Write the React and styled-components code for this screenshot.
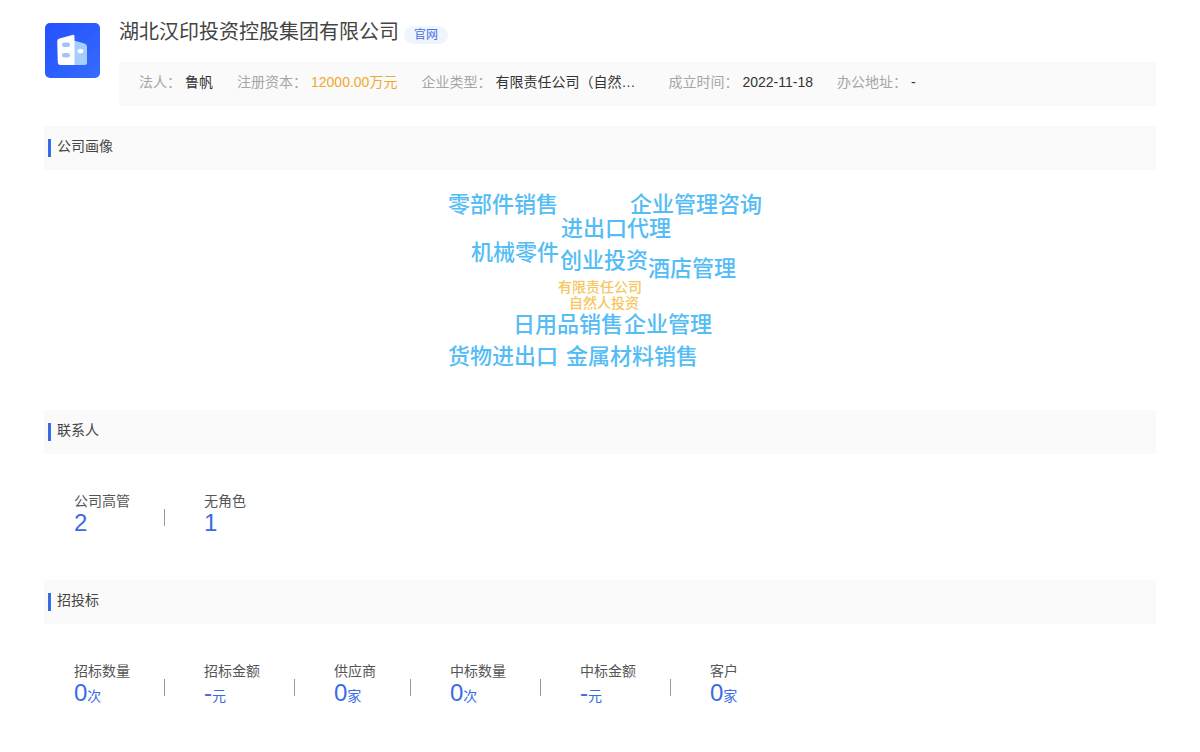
import styled, { createGlobalStyle } from "styled-components";

const GlobalStyle = createGlobalStyle`
    * {
        box-sizing: border-box;
    }

    body {
        margin: 0;
        background: #fff;
        color: #444;
        font-family: "Liberation Sans", "Noto Sans CJK SC", sans-serif;
        font-size: 14px;
        line-height: 20px;
    }
`;

const Page = styled.main`
    padding: 20px 44px;
`;

const Header = styled.header`
    display: flex;
    gap: 19px;
    margin-bottom: 20px;
`;

const Logo = styled.svg`
    flex: none;
    width: 56px;
    height: 56px;
    margin-top: 2px;
`;

const Company = styled.div`
    flex: 1;
    min-width: 0;
`;

const TitleRow = styled.div`
    display: flex;
    align-items: center;
    gap: 5px;
    height: 24px;
    margin-bottom: 18px;
`;

const Title = styled.h1`
    margin: 0;
    font-size: 20px;
    font-weight: 400;
    line-height: 24px;
`;

const SiteLink = styled.a`
    margin-top: 6px;
    padding: 0 10px;
    border-radius: 9px;
    background: #eff4fd;
    color: #4571e0;
    font-size: 12px;
    line-height: 18px;
    text-decoration: none;
`;

const InfoBar = styled.dl`
    display: flex;
    gap: 24px;
    height: 44px;
    margin: 0;
    padding: 10px 20px;
    background: #fafafa;
    white-space: nowrap;
`;

const InfoItem = styled.div`
    display: flex;
    gap: 4px;
`;

const InfoLabel = styled.dt`
    color: #a6a6a6;
`;

const InfoValue = styled.dd`
    margin: 0;
    max-width: 149px;
    min-width: ${(props) => (props.$wide ? "149px" : "0")};
    overflow: hidden;
    text-overflow: ellipsis;
    color: ${(props) => (props.$highlight ? "#f0a830" : "#333")};
`;

const SectionTitle = styled.h2`
    display: flex;
    gap: 6px;
    height: 44px;
    margin: 0;
    padding: 10px 4px;
    background: #fafafa;
    font-size: 14px;
    font-weight: 400;

    &::before {
        content: "";
        width: 3px;
        height: 18px;
        margin-top: 3px;
        background: #3a6be6;
    }
`;

const Cloud = styled.div`
    position: relative;
    width: 320px;
    height: 240px;
    margin: 0 auto;
`;

const Word = styled.span`
    position: absolute;
    left: ${(props) => props.$x}px;
    top: ${(props) => props.$y}px;
    color: ${(props) => (props.$small ? "#f7c65c" : "#54bdf6")};
    font-size: ${(props) => (props.$small ? "14px" : "22px")};
    font-weight: 500;
    line-height: ${(props) => (props.$small ? "16px" : "24px")};
    white-space: nowrap;
`;

const Stats = styled.div`
    display: flex;
    flex-wrap: wrap;
    align-items: flex-start;
    min-height: 126px;
    padding: 36px 30px;
`;

const Stat = styled.div`
    display: flex;

    & + &::before {
        content: "";
        width: 1px;
        height: 17px;
        margin: 19px 39px 0 34px;
        background: #999;
    }
`;

const StatLabel = styled.div`
    color: #555;
    line-height: 22px;
`;

const StatValue = styled.div`
    color: #3a6be6;
    font-size: 24px;
    line-height: 22px;
`;

const Unit = styled.span`
    font-size: 14px;
`;

const info = [
    { label: "法人", value: "鲁帆" },
    { label: "注册资本", value: "12000.00万元", highlight: true },
    { label: "企业类型", value: "有限责任公司（自然人投资或控股）", wide: true },
    { label: "成立时间", value: "2022-11-18" },
    { label: "办公地址", value: "-" },
];

// positions are relative to the centred cloud
const words = [
    { text: "零部件销售", x: 8, y: 23 },
    { text: "企业管理咨询", x: 190, y: 23 },
    { text: "进出口代理", x: 121, y: 47 },
    { text: "机械零件", x: 31, y: 71 },
    { text: "创业投资", x: 120, y: 79 },
    { text: "酒店管理", x: 208, y: 87 },
    { text: "有限责任公司", x: 118, y: 109, small: true },
    { text: "自然人投资", x: 129, y: 125, small: true },
    { text: "日用品销售", x: 73, y: 143 },
    { text: "企业管理", x: 184, y: 143 },
    { text: "货物进出口", x: 8, y: 175 },
    { text: "金属材料销售", x: 126, y: 175 },
];

const contacts = [
    { label: "公司高管", value: "2" },
    { label: "无角色", value: "1" },
];

const bids = [
    { label: "招标数量", value: "0", unit: "次" },
    { label: "招标金额", value: "-", unit: "元" },
    { label: "供应商", value: "0", unit: "家" },
    { label: "中标数量", value: "0", unit: "次" },
    { label: "中标金额", value: "-", unit: "元" },
    { label: "客户", value: "0", unit: "家" },
];

const CompanyLogo = () => (
    <Logo viewBox="0 0 56 56" aria-hidden="true">
        <defs>
            <linearGradient id="logoBg" x1="0" y1="0" x2="1" y2="1">
                <stop offset="0" stopColor="#2450ff" />
                <stop offset="1" stopColor="#356cfb" />
            </linearGradient>
        </defs>
        <rect x="1" y="1" width="55" height="55" rx="5" fill="url(#logoBg)" />
        <path d="M30 18.5 L40.5 21.5 Q43 22.3 43 24.5 V40.5 Q43 43 40.5 43 H30 Z" fill="#a6cdfb" />
        <path d="M15.5 16.4 L28.3 13 Q30.5 12.4 30.5 14.5 V43 H16.5 Q14 43 13.8 40.5 L13.2 19 Q13.2 17 15.5 16.4 Z" fill="#fff" />
        <rect x="18" y="20.5" width="8" height="4.6" rx="2.3" fill="#a3c2f7" />
        <rect x="18" y="31" width="8" height="4.6" rx="2.3" fill="#a3c2f7" />
        <rect x="33.5" y="27" width="6" height="4.2" rx="2.1" fill="#fff" />
    </Logo>
);

const StatList = ({ items }) => (
    <Stats>
        {items.map((item) => (
            <Stat key={item.label}>
                <div>
                    <StatLabel>{item.label}</StatLabel>
                    <StatValue>
                        {item.value}
                        {item.unit && <Unit>{item.unit}</Unit>}
                    </StatValue>
                </div>
            </Stat>
        ))}
    </Stats>
);

const App = () => {
    return (
        <>
            <GlobalStyle />
            <Page>
                <Header>
                    <CompanyLogo />
                    <Company>
                        <TitleRow>
                            <Title>湖北汉印投资控股集团有限公司</Title>
                            <SiteLink href="#">官网</SiteLink>
                        </TitleRow>
                        <InfoBar>
                            {info.map((item) => (
                                <InfoItem key={item.label}>
                                    <InfoLabel>{item.label}：</InfoLabel>
                                    <InfoValue $highlight={item.highlight} $wide={item.wide}>
                                        {item.value}
                                    </InfoValue>
                                </InfoItem>
                            ))}
                        </InfoBar>
                    </Company>
                </Header>
                <section>
                    <SectionTitle>公司画像</SectionTitle>
                    <Cloud>
                        {words.map((word) => (
                            <Word key={word.text} $x={word.x} $y={word.y} $small={word.small}>
                                {word.text}
                            </Word>
                        ))}
                    </Cloud>
                </section>
                <section>
                    <SectionTitle>联系人</SectionTitle>
                    <StatList items={contacts} />
                </section>
                <section>
                    <SectionTitle>招投标</SectionTitle>
                    <StatList items={bids} />
                </section>
            </Page>
        </>
    );
};

export default App;
